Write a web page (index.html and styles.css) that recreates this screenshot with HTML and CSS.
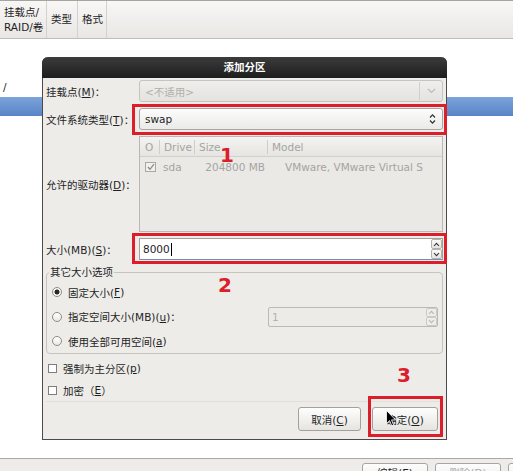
FILE: index.html
```html
<!DOCTYPE html>
<html lang="zh-CN">
<head>
<meta charset="utf-8">
<title>添加分区</title>
<link rel="stylesheet" href="styles.css">
</head>
<body>
<div class="screen">
  <div class="colhead">
    <div class="col c1">挂载点/<br>RAID/卷</div>
    <div class="col c2">类型</div>
    <div class="col c3">格式</div>
    <div class="col rest"></div>
  </div>
  <div class="list">
    <div class="row">/</div>
    <div class="row sel"></div>
  </div>
  <div class="bottombar">
    <div class="bbtn">编辑(E)</div>
    <div class="bbtn dis">删除(D)</div>
    <div class="bbtn">重设(s)</div>
  </div>
</div>

<div class="dialog">
  <div class="titlebar">添加分区</div>
  <div class="dbody">
    <div class="form">
      <div class="lbl">挂载点(<u>M</u>)：</div>
      <div class="combo disabled">
        <span class="ctext">&lt;不适用&gt;</span>
        <span class="drop"><svg width="9" height="6" viewBox="0 0 9 6"><polyline points="0.8,0.8 4.5,4.5 8.2,0.8" fill="none" stroke="#b9b8b5" stroke-width="1.2"/></svg></span>
      </div>

      <div class="lbl">文件系统类型(<u>T</u>)：</div>
      <div class="combo active">
        <span class="ctext">swap</span>
        <span class="updown"><svg width="7" height="12" viewBox="0 0 7 12"><polyline points="1,4.5 3.5,1.8 6,4.5" fill="none" stroke="#333" stroke-width="1.2"/><polyline points="1,7.5 3.5,10.2 6,7.5" fill="none" stroke="#333" stroke-width="1.2"/></svg></span>
      </div>

      <div class="lbl">允许的驱动器(<u>D</u>)：</div>
      <div class="tree">
        <div class="thead">
          <div class="th first">O</div>
          <div class="th">Drive</div>
          <div class="th">Size</div>
          <div class="th">Model</div>
        </div>
        <div class="trow">
          <div class="td first"><span class="tcb"><svg width="8" height="8" viewBox="0 0 8 8"><polyline points="1,4 3,6.3 7,1.2" fill="none" stroke="#8a8a8a" stroke-width="1.3"/></svg></span></div>
          <div class="td drive">sda</div>
          <div class="td size">204800 MB</div>
          <div class="td model">VMware, VMware Virtual S</div>
        </div>
      </div>

      <div class="lbl">大小(MB)(<u>S</u>)：</div>
      <div class="spin focus">
        <span class="val">8000<i class="caret"></i></span>
        <span class="sbtns">
          <span class="sb"><svg width="7" height="5" viewBox="0 0 7 5"><polyline points="1,4 3.5,1.3 6,4" fill="none" stroke="#333" stroke-width="1.1"/></svg></span>
          <span class="sb"><svg width="7" height="5" viewBox="0 0 7 5"><polyline points="1,1 3.5,3.7 6,1" fill="none" stroke="#333" stroke-width="1.1"/></svg></span>
        </span>
      </div>
    </div>

    <fieldset class="frame">
      <legend>其它大小选项</legend>
      <div class="opt o1"><span class="radio on"></span>固定大小(<u>F</u>)</div>
      <div class="opt o2"><span class="radio"></span>指定空间大小(MB)(<u>u</u>)：
        <div class="spin small">
          <span class="val">1</span>
          <span class="sbtns">
            <span class="sb"><svg width="7" height="5" viewBox="0 0 7 5"><polyline points="1,4 3.5,1.3 6,4" fill="none" stroke="#b5b4b1" stroke-width="1.1"/></svg></span>
            <span class="sb"><svg width="7" height="5" viewBox="0 0 7 5"><polyline points="1,1 3.5,3.7 6,1" fill="none" stroke="#b5b4b1" stroke-width="1.1"/></svg></span>
          </span>
        </div>
      </div>
      <div class="opt o3"><span class="radio"></span>使用全部可用空间(<u>a</u>)</div>
    </fieldset>

    <div class="check first"><span class="cb"></span>强制为主分区(<u>p</u>)</div>
    <div class="check"><span class="cb"></span>加密（<u>E</u>）</div>

    <div class="buttons">
      <button class="btn cancel">取消(<u>C</u>)</button>
      <button class="btn ok">确定(<u>O</u>)</button>
    </div>
  </div>
</div>

<div class="mark m1"></div>
<div class="mark m2"></div>
<div class="mark m3"></div>
<div class="num n1">1</div>
<div class="num n2">2</div>
<div class="num n3">3</div>
<svg class="cursor" width="10" height="17" viewBox="0 0 10 17"><path d="M0.5 0.5 L0.5 13.5 L3.6 10.6 L5.8 15.8 L7.6 15 L5.5 9.9 L9.5 9.9 Z" fill="#000" stroke="#fff" stroke-width="0.8"/></svg>
</body>
</html>
```
FILE: styles.css
```css
* { box-sizing: border-box; }
html, body { margin: 0; padding: 0; }
body {
  width: 513px;
  height: 471px;
  overflow: hidden;
  position: relative;
  background: #fff;
  font-family: "DejaVu Sans", "Noto Sans CJK SC", sans-serif;
  font-size: 10.5px;
  color: #1e1e1e;
}
u { text-decoration: underline; text-underline-offset: 1px; }

/* background screen */
.screen { height: 471px; display: flex; flex-direction: column; }
.colhead {
  height: 39px;
  flex-shrink: 0;
  display: flex;
  border-top: 1px solid #a4a4a2;
  border-bottom: 1px solid #bebdba;
  background: linear-gradient(#f8f7f6, #e8e7e4);
}
.col {
  border-right: 1px solid #d3d2ce;
  padding-left: 4px;
  display: flex;
  align-items: center;
  line-height: 15px;
}
.c1 { width: 47px; }
.c2 { width: 31px; }
.c3 { width: 29px; }
.rest { flex: 1; border-right: none; }
.list { flex: 1; padding-top: 39px; }
.row { height: 19px; line-height: 19px; padding-left: 3px; }
.row.sel { background: linear-gradient(#7ca3da, #5985c6); }
.bottombar {
  height: 13px;
  flex-shrink: 0;
  border-top: 1px solid #a9a8a5;
  background: #edecea;
  display: flex;
  gap: 7px;
  padding: 4px 0 0 362px;
  overflow: hidden;
}
.bbtn {
  flex-shrink: 0;
  width: 66px;
  height: 24px;
  border: 1px solid #a6a5a1;
  border-radius: 3px;
  background: linear-gradient(#fdfdfd, #e7e6e3);
  text-align: center;
  line-height: 18px;
}
.bbtn.dis { color: #a8a8a8; }

/* dialog */
.dialog {
  position: absolute;
  left: 42px;
  top: 57px;
  width: 405px;
  height: 383px;
  display: flex;
  flex-direction: column;
  background: #edece9;
  border: 1px solid #4b4b4b;
  border-top: none;
  border-radius: 6px 6px 0 0;
}
.titlebar {
  height: 21px;
  margin: 0 -1px;
  flex-shrink: 0;
  background: linear-gradient(#3c3c3c, #1d1d1d);
  border-radius: 6px 6px 0 0;
  color: #fff;
  font-weight: bold;
  text-align: center;
  line-height: 21px;
}
.dbody { flex: 1; padding: 2px 3px 0 3px; display: flex; flex-direction: column; }
.form {
  display: grid;
  grid-template-columns: 93px 1fr;
  grid-template-rows: 22px 22px 96px 22px;
  row-gap: 6px;
}
.lbl { align-self: center; white-space: nowrap; }

.combo {
  display: flex;
  align-items: center;
  border: 1px solid #a9a7a2;
  border-radius: 3px;
  padding-left: 5px;
}
.combo .ctext { flex: 1; }
.combo.disabled {
  background: linear-gradient(#efeeec, #e4e3e0);
  border-color: #c6c4bf;
  color: #b0afab;
}
.combo .drop {
  width: 23px;
  height: 18px;
  border-left: 1px solid #d2d0cb;
  display: flex;
  align-items: center;
  justify-content: center;
}
.combo.active { background: linear-gradient(#fcfcfc, #eaeae8); }
.combo .updown { display: flex; margin-right: 6px; }

.tree {
  border: 1px solid #bab8b3;
  background: #eae9e6;
  color: #a5a4a1;
  overflow: hidden;
}
.thead, .trow { display: grid; grid-template-columns: 19px 35px 73px 1fr; }
.thead {
  height: 20px;
  background: linear-gradient(#f3f3f1, #e6e5e2);
  border-bottom: 1px solid #d2d0cb;
  align-items: center;
}
.th { padding-left: 4px; border-left: 1px solid #d0cec9; height: 14px; line-height: 14px; }
.th.first { border-left: none; padding-left: 5px; }
.trow { height: 19px; align-items: center; }
.td { white-space: nowrap; overflow: hidden; }
.td.first { padding-left: 5px; display: flex; }
.tcb {
  width: 11px;
  height: 10px;
  border: 1px solid #a9a8a5;
  background: #f1f0ee;
  display: flex;
  align-items: center;
  justify-content: center;
}
.td.drive { padding-left: 4px; }
.td.size { text-align: right; padding-right: 2px; }
.td.model { padding-left: 18px; }

.spin {
  display: flex;
  align-items: center;
  border: 1px solid #a3a19c;
  background: #fff;
}
.spin.focus { border-bottom-color: #6f8fc0; }
.spin .val { flex: 1; padding-left: 3px; display: flex; align-items: center; }
.caret { display: inline-block; width: 1px; height: 13px; background: #000; margin-left: 1px; }
.sbtns { display: flex; flex-direction: column; margin-right: 0; }
.sb {
  width: 11px;
  height: 10px;
  border: 1px solid #b3b1ac;
  border-radius: 2px;
  background: linear-gradient(#fbfbfa, #e5e4e1);
  display: flex;
  align-items: center;
  justify-content: center;
}
.spin.small {
  width: 170px;
  height: 20px;
  margin-left: auto;
  background: #ecebe8;
  border-color: #bcbab5;
  border-radius: 2px;
  color: #b2b1ae;
}
.spin.small .sb { height: 9px; border-color: #cccac5; background: #efeeec; }

.frame {
  margin: 6px 0 0 0;
  padding: 1px 4px 0 2px;
  border: 1px solid #c6c4bf;
  border-radius: 4px;
  min-width: 0;
}
.frame legend { padding: 0 1px; line-height: 13px; }
.opt { display: flex; align-items: center; padding-left: 3px; height: 24px; white-space: nowrap; }
.opt.o2 { height: 25px; }
.radio {
  width: 10px;
  height: 10px;
  border: 1px solid #8e8d8a;
  border-radius: 50%;
  background: linear-gradient(#ffffff, #e9e8e5);
  margin-right: 6px;
  flex-shrink: 0;
}
.radio.on { background: radial-gradient(circle, #2a2a2a 0, #2a2a2a 2.2px, #f6f6f5 2.8px); }

.check { display: flex; align-items: center; height: 22px; padding-left: 2px; }
.check.first { margin-top: 3px; }
.cb {
  width: 9px;
  height: 9px;
  border: 1px solid #7f7e7b;
  background: #fff;
  margin-right: 6px;
  flex-shrink: 0;
}

.buttons {
  border-top: 1px solid #e1e0dc;
  display: flex;
  justify-content: flex-end;
  gap: 11px;
  padding: 5px 5px 0 0;
}
.btn {
  height: 24px;
  border: 1px solid #a3a19c;
  border-radius: 3px;
  background: linear-gradient(#fefefe, #e5e4e1);
  font: inherit;
  color: #1e1e1e;
  padding: 0;
}
.btn.cancel { width: 63px; }
.btn.ok { width: 66px; }

/* annotations */
.mark { position: absolute; border: 3px solid #dc1e2a; }
.m1 { left: 132px; top: 104px; width: 315px; height: 31px; }
.m2 { left: 132px; top: 233px; width: 315px; height: 31px; }
.m3 { left: 368px; top: 396px; width: 75px; height: 41px; }
.num {
  position: absolute;
  font-family: "DejaVu Sans", sans-serif;
  font-weight: bold;
  font-size: 20px;
  line-height: 20px;
  color: #dc1e2a;
}
.n1 { left: 220px; top: 145px; }
.n2 { left: 218px; top: 275px; }
.n3 { left: 397px; top: 365px; }
.cursor { position: absolute; left: 386px; top: 410px; }
```
